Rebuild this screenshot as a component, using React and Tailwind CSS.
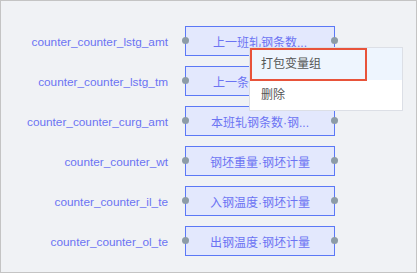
import React from "react";

const rows = [
  { label: "counter_counter_lstg_amt", text: "上一班轧钢条数..." },
  { label: "counter_counter_lstg_tm", text: "上一条钢坯轧制..." },
  { label: "counter_counter_curg_amt", text: "本班轧钢条数·钢..." },
  { label: "counter_counter_wt", text: "钢坯重量·钢坯计量" },
  { label: "counter_counter_il_te", text: "入钢温度·钢坯计量" },
  { label: "counter_counter_ol_te", text: "出钢温度·钢坯计量" },
];

const FONT = '"Liberation Sans", "Noto Sans CJK SC", sans-serif';

export default function App() {
  return (
    <div
      className="relative w-[417px] h-[273px] bg-[#f0f2f5] border border-[#c4c4c4] overflow-hidden"
      style={{ fontFamily: FONT }}
    >
      <div className="flex flex-col gap-[10px] pt-[25px]">
        {rows.map((r) => (
          <div key={r.label} className="flex items-center h-[30px]">
            <div className="w-[167px] text-right text-[11.8px] leading-none text-[#6b73f3] pt-[4px]">
              {r.label}
            </div>
            <div className="relative ml-[17px] w-[150px] h-[30px] border border-[#5b78f6] bg-[#e3e8fd] flex items-center justify-center">
              <span className="text-[12px] leading-none text-[#6b73f3] pt-[3px] whitespace-nowrap">
                {r.text}
              </span>
              <span className="absolute left-[-4px] top-[10px] w-[7px] h-[7px] rounded-full bg-[#8d9ca6]" />
              <span className="absolute right-[-4px] top-[10px] w-[7px] h-[7px] rounded-full bg-[#8d9ca6]" />
            </div>
          </div>
        ))}
      </div>

      <div className="absolute left-[248px] top-[46px] w-[154px] h-[64px] bg-white border border-[#dcdfe6] text-[12px] text-[#555] flex flex-col">
        <div className="h-[32px] bg-[#eef5fe] flex items-center pl-[11px]">打包变量组</div>
        <div className="flex-1 flex items-center pl-[11px]">删除</div>
        <div className="absolute left-0 top-0 w-[117px] h-[33px] border-2 border-[#e8533a]" />
      </div>
    </div>
  );
}
